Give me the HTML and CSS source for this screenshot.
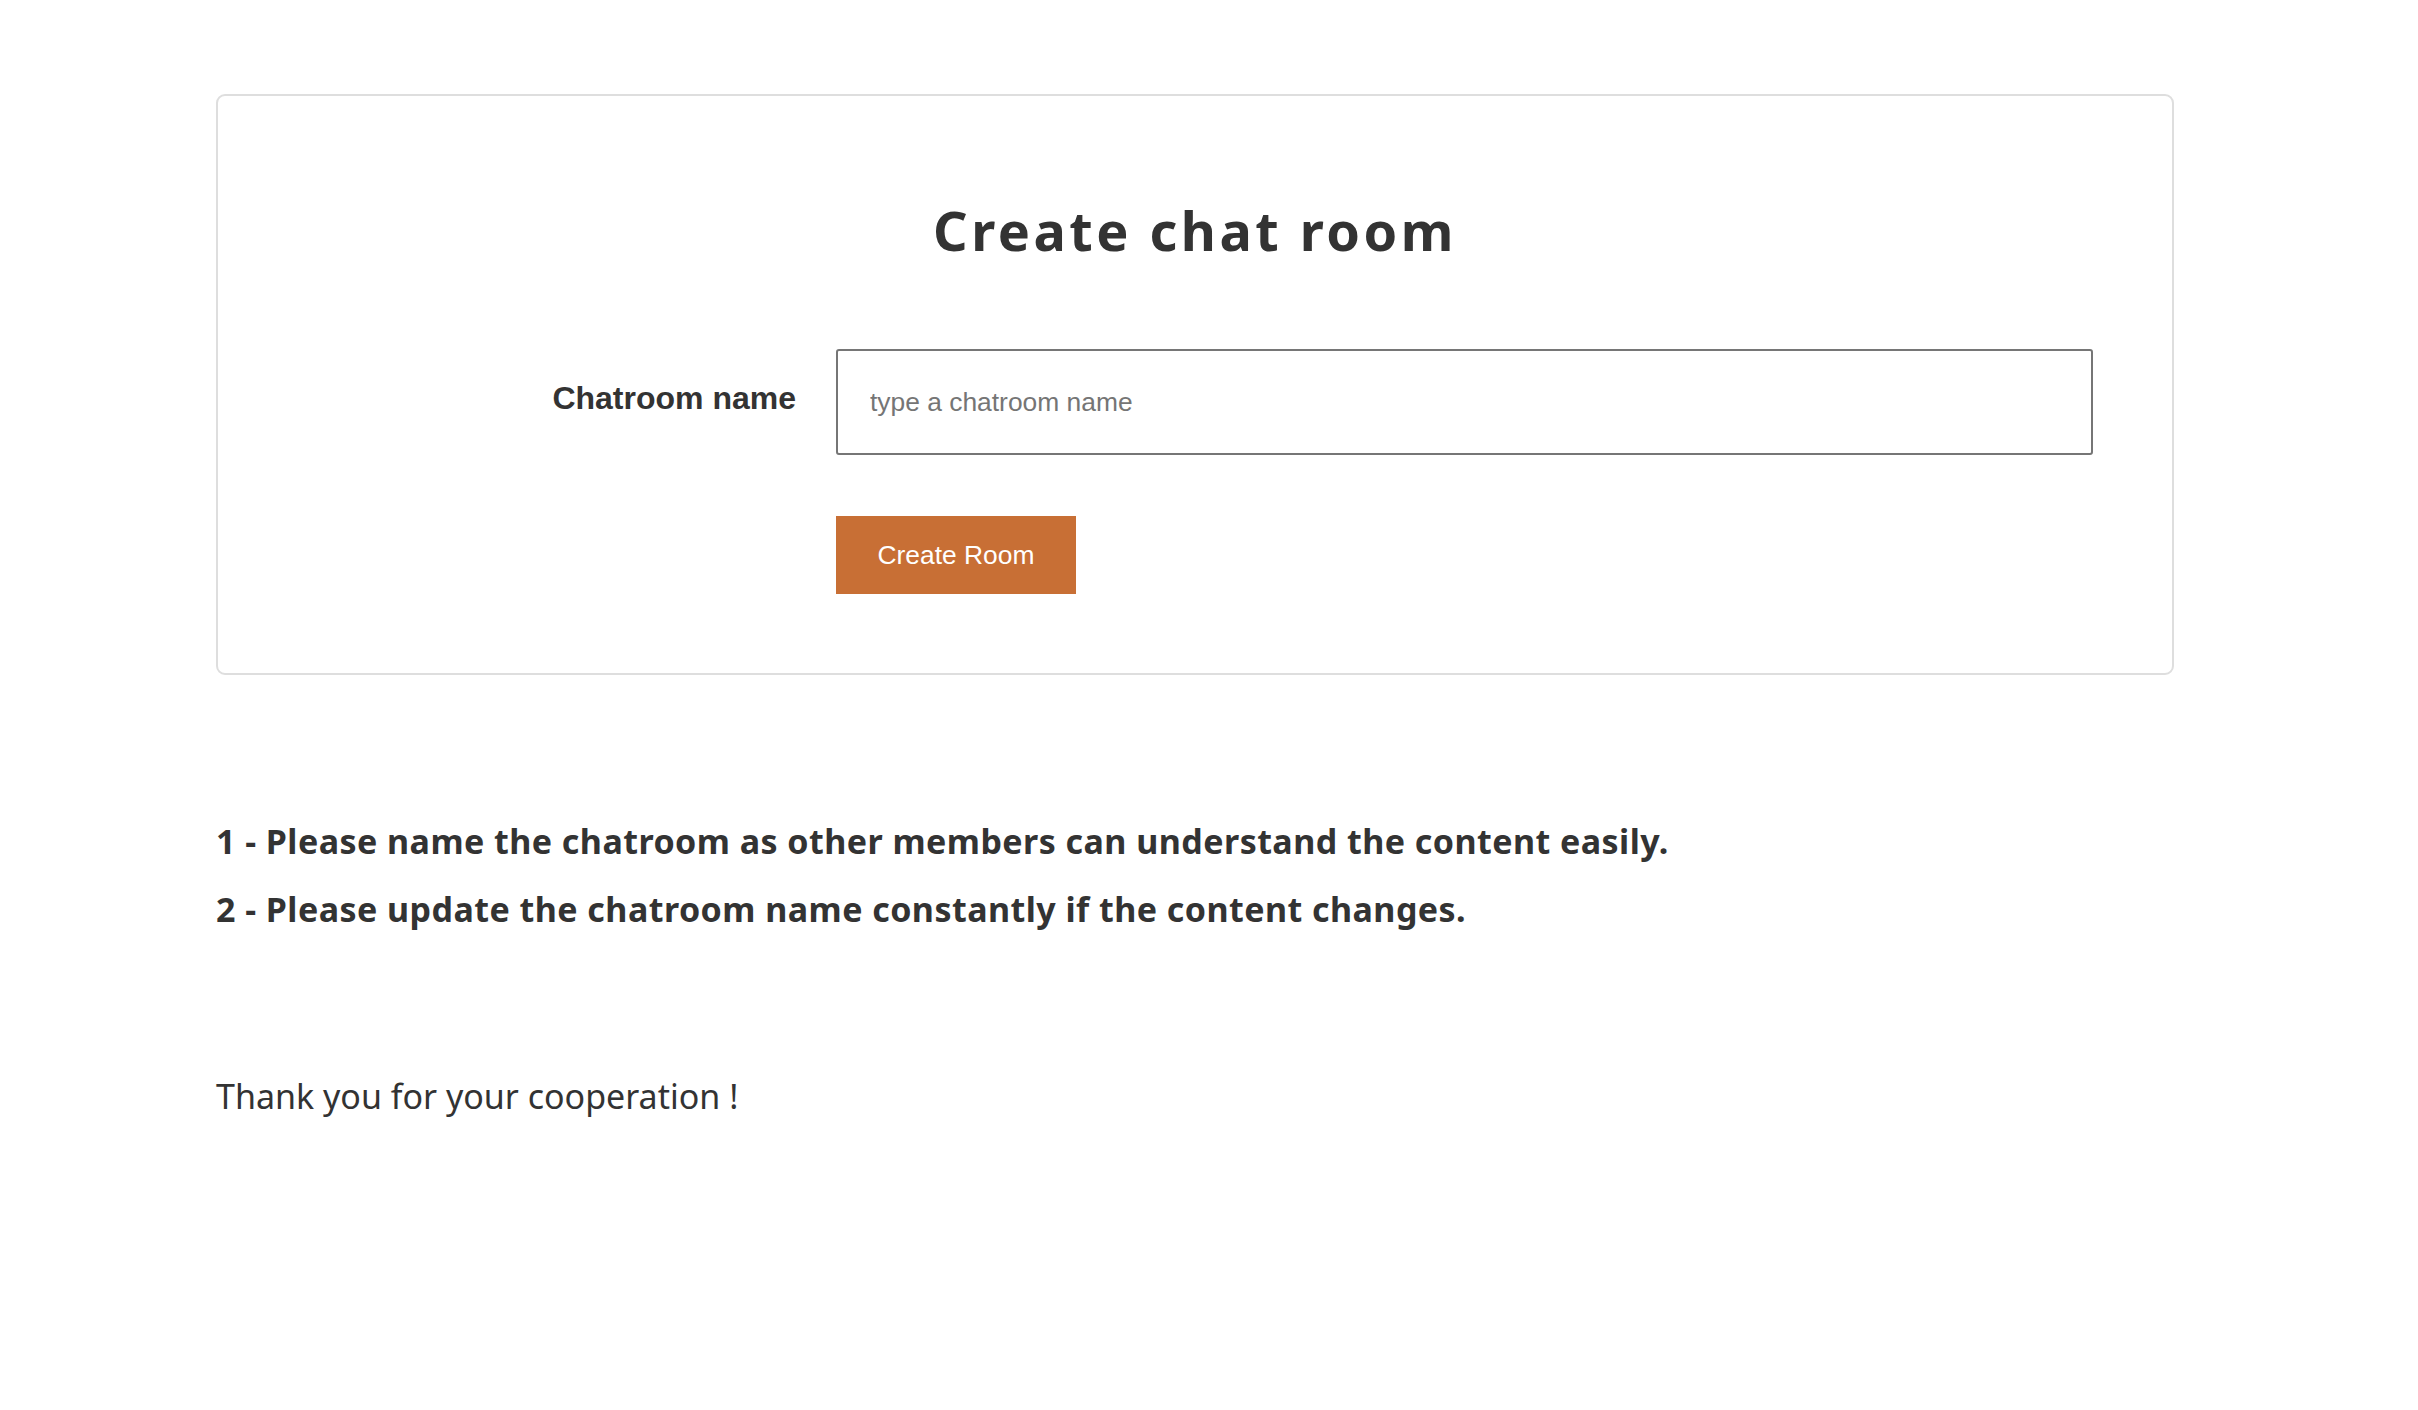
FILE: index.html
```html
<!DOCTYPE html>
<html lang="en">
<head>
<meta charset="utf-8">
<title>Create chat room</title>
<link rel="stylesheet" href="styles.css">
</head>
<body>
<main class="page">
  <section class="card">
    <h1 class="card-title">Create chat room</h1>
    <form class="room-form" onsubmit="return false">
      <label class="field-label" for="room-name">Chatroom name</label>
      <input class="field-input" id="room-name" type="text" placeholder="type a chatroom name">
      <div class="form-actions">
        <button class="btn-create" type="submit">Create Room</button>
      </div>
    </form>
  </section>
  <ol class="rules">
    <li>1 - Please name the chatroom as other members can understand the content easily.</li>
    <li>2 - Please update the chatroom name constantly if the content changes.</li>
  </ol>
  <p class="thanks">Thank you for your cooperation !</p>
</main>
</body>
</html>
```

FILE: styles.css
```css
html, body {
  margin: 0;
  padding: 0;
  background: #ffffff;
}

body {
  font-family: "Noto Sans", "Noto Sans CJK JP", sans-serif;
  color: #333333;
}

.page {
  padding: 94px 0 0 216px;
  width: 1958px;
}

.card {
  border: 2px solid #dedede;
  border-radius: 9px;
  padding: 102px 0 79px 0;
}

.card-title {
  margin: 0;
  text-align: center;
  font-size: 54px;
  line-height: 64px;
  font-weight: 700;
  letter-spacing: 3.5px;
  color: #333333;
}

.room-form {
  display: grid;
  grid-template-columns: 578px 1fr;
  column-gap: 40px;
  row-gap: 61px;
  align-items: center;
  margin-top: 87px;
  padding-right: 79px;
}

.field-label {
  justify-self: end;
  font-family: "Liberation Sans", Arial, sans-serif;
  font-weight: 700;
  font-size: 32px;
  margin-top: -8px;
  color: #333333;
}

.field-input {
  box-sizing: border-box;
  height: 106px;
  width: 100%;
  border: 2px solid #767676;
  border-radius: 3px;
  padding: 0 32px;
  font-family: "Liberation Sans", Arial, sans-serif;
  font-size: 26.4px;
  color: #333333;
  outline: none;
}

.field-input::placeholder {
  color: #757575;
}

.form-actions {
  grid-column: 2;
}

.btn-create {
  box-sizing: border-box;
  width: 240px;
  height: 78px;
  border: none;
  border-radius: 0;
  background: #c86f35;
  color: #ffffff;
  font-family: "Liberation Sans", Arial, sans-serif;
  font-size: 26.4px;
  padding: 0;
  cursor: pointer;
}

.rules {
  list-style: none;
  margin: 132px 0 0 0;
  padding: 0;
}

.rules li {
  font-size: 34px;
  line-height: 68px;
  font-weight: 700;
  letter-spacing: 0.45px;
}

.thanks {
  margin: 119px 0 0 0;
  font-size: 34px;
  line-height: 68px;
  font-weight: 400;
}
```
